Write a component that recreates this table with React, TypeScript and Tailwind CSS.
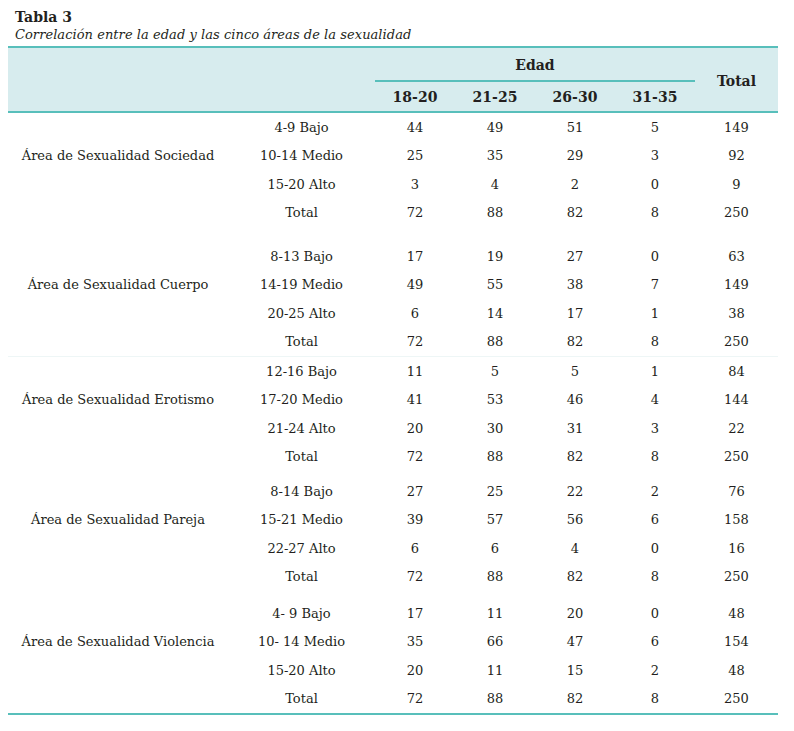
import React from "react";

type Group = {
  area: string;
  pt: string;
  faint?: boolean;
  rows: [string, number, number, number, number, number][];
};

const groups: Group[] = [
  {
    area: "Área de Sexualidad Sociedad",
    pt: "pt-0",
    rows: [
      ["4-9 Bajo", 44, 49, 51, 5, 149],
      ["10-14 Medio", 25, 35, 29, 3, 92],
      ["15-20 Alto", 3, 4, 2, 0, 9],
      ["Total", 72, 88, 82, 8, 250],
    ],
  },
  {
    area: "Área de Sexualidad Cuerpo",
    pt: "pt-[15px]",
    faint: true,
    rows: [
      ["8-13 Bajo", 17, 19, 27, 0, 63],
      ["14-19 Medio", 49, 55, 38, 7, 149],
      ["20-25 Alto", 6, 14, 17, 1, 38],
      ["Total", 72, 88, 82, 8, 250],
    ],
  },
  {
    area: "Área de Sexualidad Erotismo",
    pt: "pt-0",
    rows: [
      ["12-16 Bajo", 11, 5, 5, 1, 84],
      ["17-20 Medio", 41, 53, 46, 4, 144],
      ["21-24 Alto", 20, 30, 31, 3, 22],
      ["Total", 72, 88, 82, 8, 250],
    ],
  },
  {
    area: "Área de Sexualidad Pareja",
    pt: "pt-[6px]",
    rows: [
      ["8-14 Bajo", 27, 25, 22, 2, 76],
      ["15-21 Medio", 39, 57, 56, 6, 158],
      ["22-27 Alto", 6, 6, 4, 0, 16],
      ["Total", 72, 88, 82, 8, 250],
    ],
  },
  {
    area: "Área de Sexualidad Violencia",
    pt: "pt-[8px]",
    rows: [
      ["4- 9 Bajo", 17, 11, 20, 0, 48],
      ["10- 14 Medio", 35, 66, 47, 6, 154],
      ["15-20 Alto", 20, 11, 15, 2, 48],
      ["Total", 72, 88, 82, 8, 250],
    ],
  },
];

const cols = "grid grid-cols-[220px_147px_80px_80px_80px_80px_83px]";

export default function App() {
  return (
    <div className="min-h-[731px] bg-white text-[#231f20] font-['DejaVu_Serif',serif] pt-[8px] pl-[8px]">
      <div className="pl-[7px]">
        <p className="text-[14px] font-bold leading-[18px]">Tabla 3</p>
        <p className="text-[13px] italic leading-[18px] tracking-[0.05px]">
          Correlación entre la edad y las cinco áreas de la sexualidad
        </p>
      </div>

      <div className="w-[770px] mt-[2px] border-t-2 border-b-2 border-[#58bfbb]">
        {/* Header */}
        <div className={`${cols} bg-[#d7ecee] border-b-2 border-[#58bfbb] text-[14px] font-bold`}>
          <div className="row-span-2" />
          <div className="row-span-2" />
          <div className="col-span-4 h-[34px] pt-[3px] flex items-center justify-center border-b-2 border-[#58bfbb]">
            Edad
          </div>
          <div className="row-span-2 flex items-center justify-center pt-[4px]">Total</div>
          <div className="h-[29px] flex items-center justify-center pt-[1px]">18-20</div>
          <div className="h-[29px] flex items-center justify-center pt-[1px]">21-25</div>
          <div className="h-[29px] flex items-center justify-center pt-[1px]">26-30</div>
          <div className="h-[29px] flex items-center justify-center pt-[1px]">31-35</div>
        </div>

        {/* Body */}
        {groups.map((g) => (
          <div
            key={g.area}
            className={`${cols} ${g.pt} text-[13px] ${g.faint ? "border-b border-[#eef6f6]" : ""}`}
          >
            {g.rows.map((r, i) => (
              <React.Fragment key={r[0]}>
                <div className="h-[28.5px] flex items-center justify-center">
                  {i === 1 ? g.area : ""}
                </div>
                {r.map((v, j) => (
                  <div key={j} className="h-[28.5px] flex items-center justify-center">
                    {v}
                  </div>
                ))}
              </React.Fragment>
            ))}
          </div>
        ))}
      </div>
    </div>
  );
}
